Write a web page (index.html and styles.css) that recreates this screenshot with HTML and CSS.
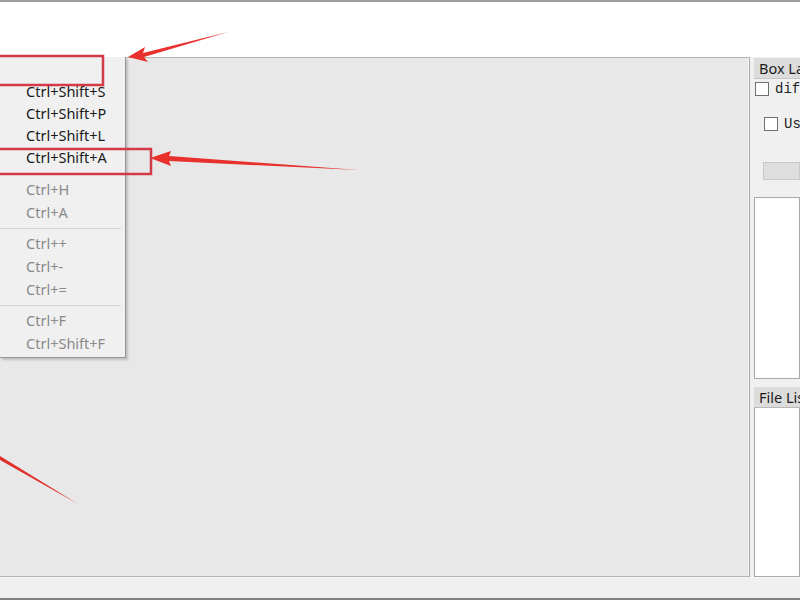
FILE: index.html
```html
<!DOCTYPE html>
<html>
<head>
<meta charset="utf-8">
<link rel="stylesheet" href="styles.css">
</head>
<body>
<div class="app">
  <div class="topbar"></div>
  <div class="main">
    <div class="canvas"></div>
    <div class="side">
      <div class="group">
        <div class="group-title">Box Labels</div>
        <label class="chk first"><span class="box"></span><span class="mono">difficult</span></label>
        <label class="chk second"><span class="box"></span><span class="mono">Use default label</span></label>
        <div class="btn"></div>
        <div class="listbox"></div>
      </div>
      <div class="group files">
        <div class="group-title">File List</div>
        <div class="listbox grow"></div>
      </div>
    </div>
  </div>
  <div class="status"></div>

  <div class="menu">
    <div class="item"><span class="sc"></span></div>
    <div class="item"><span class="sc">Ctrl+Shift+S</span></div>
    <div class="item"><span class="sc">Ctrl+Shift+P</span></div>
    <div class="item"><span class="sc">Ctrl+Shift+L</span></div>
    <div class="item"><span class="sc">Ctrl+Shift+A</span></div>
    <div class="sep wide"></div>
    <div class="item off"><span class="sc">Ctrl+H</span></div>
    <div class="item off"><span class="sc">Ctrl+A</span></div>
    <div class="sep"></div>
    <div class="item off"><span class="sc">Ctrl++</span></div>
    <div class="item off"><span class="sc">Ctrl+-</span></div>
    <div class="item off"><span class="sc">Ctrl+=</span></div>
    <div class="sep"></div>
    <div class="item off"><span class="sc">Ctrl+F</span></div>
    <div class="item off"><span class="sc">Ctrl+Shift+F</span></div>
  </div>

  <svg class="annot" width="800" height="600" viewBox="0 0 800 600">
    <rect x="-10" y="56" width="113" height="29" fill="none" stroke="#d23a48" stroke-width="2.5"/>
    <rect x="-10" y="149" width="161" height="25" fill="none" stroke="#d23a48" stroke-width="2.5"/>
    <polygon points="128,57 145,47 143,53 228,32 144,57 148,62" fill="#e8302c"/>
    <polygon points="150,158 171,151 169,156 358,170 169,161 171,166" fill="#e8302c"/>
    <polygon points="0,456 78,504 0,460" fill="#e0302c"/>
  </svg>
</div>
</body>
</html>
```

FILE: styles.css
```css
* { box-sizing: border-box; }
html, body { margin: 0; padding: 0; }
body { width: 800px; height: 600px; overflow: hidden; background: #ffffff; font-family: "Noto Sans", "Open Sans", sans-serif; }
.app { position: relative; width: 800px; height: 600px; display: flex; flex-direction: column; }
.topbar { height: 57px; background: #ffffff; border-top: 2px solid #9c9c9c; }
.main { height: 520px; display: flex; background: #f0f0f0; }
.canvas { flex: none; width: 750px; background: #e8e8e8; border-top: 1px solid #b4b4b4; border-right: 1px solid #a8a8a8; border-bottom: 1px solid #b4b4b4; box-shadow: inset -1px 0 0 #f4f4f4; }
.side { flex: 1; min-width: 0; overflow: hidden; display: flex; flex-direction: column; padding: 1px 0 0 4px; background: #f0f0f0; }
.group { display: flex; flex-direction: column; height: 322px; }
.group-title { height: 21px; background: #dcdcdc; font-size: 14.5px; color: #1c1c1c; padding: 0 0 0 5px; line-height: 20px; white-space: nowrap; overflow: hidden; border-bottom: 1px solid #c8c8c8; }
.chk { display: flex; align-items: center; gap: 6px; white-space: nowrap; height: 14px; }
.chk.first { margin-top: 3px; padding-left: 1px; }
.chk.second { margin-top: 21px; padding-left: 10px; }
.box { width: 14px; height: 14px; border: 1px solid #707070; background: #ffffff; flex: none; }
.mono { font-family: "Liberation Mono", monospace; font-size: 14px; color: #222; }
.btn { margin: 31px 0 0 9px; height: 18px; background: #dedede; border: 1px solid #c8c8c8; }
.listbox { margin-top: 17px; height: 182px; background: #ffffff; border: 1px solid #a8a8a8; }
.files { height: auto; flex: 1; margin-top: 7px; }
.files .group-title { border-bottom: 1px solid #b8b8b8; }
.listbox.grow { margin-top: 0; flex: 1; height: auto; border-top: none; }
.status { height: 23px; background: #f0f0f0; border-bottom: 2px solid #808080; border-top: 1px solid #f8f8f8; }
.menu { position: absolute; left: 0; top: 57px; width: 126px; height: 301px; background: #f0f0f0; border-right: 1px solid #979797; border-bottom: 1px solid #979797; box-shadow: 2px 2px 2px rgba(0,0,0,0.18); padding-top: 1px; font-size: 14.5px; color: #1a1a1a; }
.item { height: 22px; padding-left: 26px; line-height: 22px; white-space: nowrap; }
.item.off { color: #8a8a8a; height: 23px; line-height: 23px; }
.sep { height: 8px; display: flex; align-items: center; padding-right: 4px; }
.sep.wide { height: 10px; }
.sep::after { content: ""; display: block; width: 100%; height: 1px; background: #d7d7d7; }
.annot { position: absolute; left: 0; top: 0; pointer-events: none; }
```
